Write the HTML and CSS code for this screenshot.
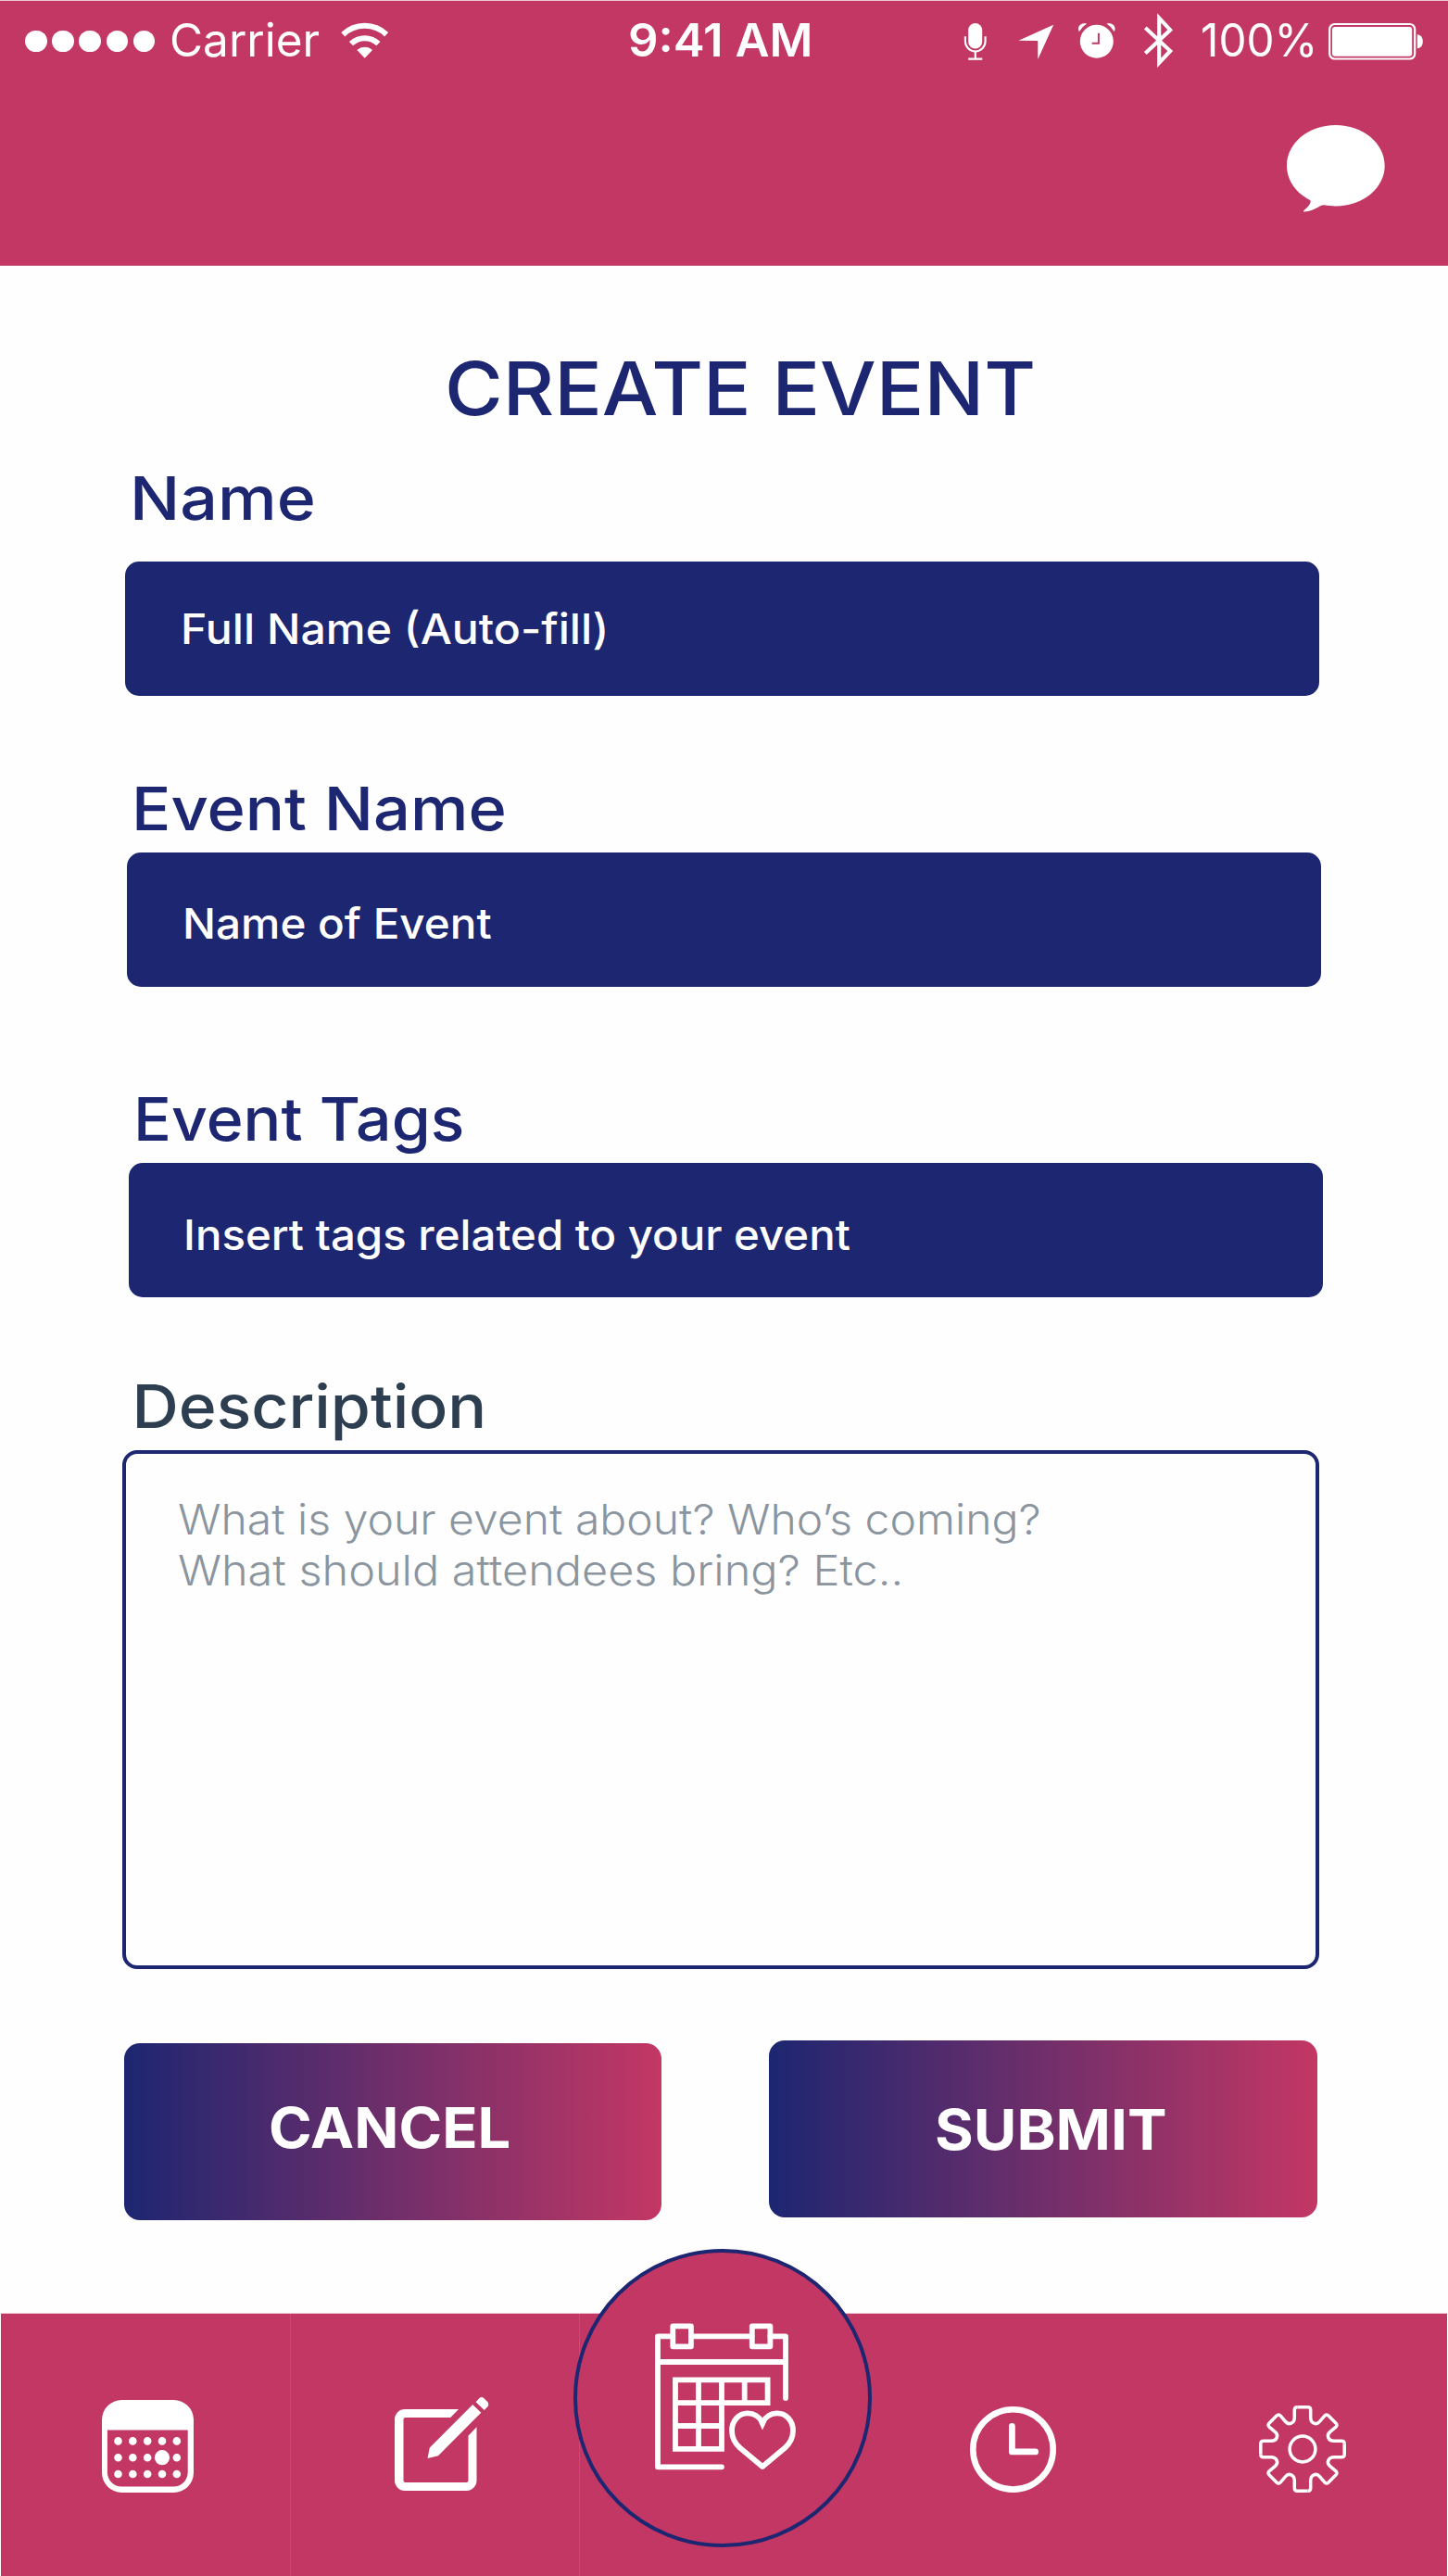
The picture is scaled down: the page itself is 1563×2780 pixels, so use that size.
FILE: index.html
```html
<!DOCTYPE html>
<html lang="en">
<head>
<meta charset="utf-8">
<title>Create Event</title>
<link rel="stylesheet" href="styles.css">
</head>
<body>
<header class="header">
  <div class="status">
    <div class="status-left">
      <div class="signal"><i></i><i></i><i></i><i></i><i></i></div>
      <span class="carrier">Carrier</span>
      <svg class="wifi" viewBox="368 22 52 41" width="52" height="41">
        <g fill="none" stroke="#fff" stroke-width="6">
          <path d="M370.3 36.2A34 34 0 0 1 417.1 36.2"/>
          <path d="M379 46.2A21 21 0 0 1 408.4 46.2"/>
        </g>
        <path fill="#fff" d="M385.4 53A12 12 0 0 1 402 53L393.7 61.8Z"/>
      </svg>
    </div>
    <span class="time">9:41 AM</span>
    <div class="status-right">
      <svg class="mic" viewBox="1040 22 26 43" width="26" height="43">
        <rect x="1045.2" y="24" width="15" height="27.5" rx="7.5" fill="#fff"/>
        <path d="M1041.9 38.3V43.6a10.8 10.8 0 0 0 21.7 0V38.3M1052.8 54.4V62.6M1045.2 62.6H1060.3" fill="none" stroke="#fff" stroke-width="2.1"/>
      </svg>
      <svg class="location" viewBox="1098 24 41 41" width="41" height="41">
        <path fill="#fff" d="M1099.5 42.7L1137.2 25.8L1120.3 63V43Z"/>
      </svg>
      <svg class="alarm" viewBox="1163 22 42 42" width="42" height="42">
        <circle cx="1183.8" cy="43.7" r="18" fill="#fff"/>
        <path fill="#fff" d="M1164.8 33.3C1162 27.5 1167 22.6 1173.2 24.6Q1167.8 28 1164.8 33.3ZM1202.8 33.3C1205.6 27.5 1200.6 22.6 1194.4 24.6Q1199.8 28 1202.8 33.3Z"/>
        <path d="M1185.9 34.7V45.8H1178.7" fill="none" stroke="#c33764" stroke-width="2"/>
      </svg>
      <svg class="bluetooth" viewBox="1233 11 35 63" width="35" height="63">
        <path d="M1236.3 29L1263.2 54L1251.2 66.8V18.4L1263.2 31.3L1236.3 56.5" fill="none" stroke="#fff" stroke-width="4.1" stroke-miterlimit="8"/>
      </svg>
      <span class="percent">100%</span>
      <svg class="battery" viewBox="1433 22 104 43" width="104" height="43">
        <rect x="1435.2" y="25" width="92" height="37.5" rx="5.5" fill="none" stroke="#fff" stroke-width="2.2"/>
        <rect x="1438" y="28" width="86.2" height="31.7" rx="3" fill="#fff"/>
        <path fill="#fff" d="M1529.8 36.3C1537.8 36.3 1537.8 51.3 1529.8 51.3Z"/>
      </svg>
    </div>
  </div>
  <svg class="chat" viewBox="1388 134 108 96" width="108" height="96">
    <path fill="#fff" d="M1441.7 135C1471.2 135 1494.7 154.6 1494.7 178.8C1494.7 203 1471.2 222.5 1441.7 222.5C1437.5 222.5 1433.2 222 1429.5 221.3C1424.5 220.8 1419 228.3 1407.7 228.5C1406.8 228.5 1406.6 227.9 1407.3 227.2C1412 223.7 1416 218.5 1414.2 216C1399 208.5 1389 194.5 1389 178.8C1389 154.6 1412.2 135 1441.7 135Z"/>
  </svg>
</header>

<main class="form">
  <h1 class="title">CREATE EVENT</h1>

  <section class="field field-name">
    <label class="label">Name</label>
    <div class="input"><span>Full Name (Auto-fill)</span></div>
  </section>
  <section class="field field-event">
    <label class="label">Event Name</label>
    <div class="input"><span>Name of Event</span></div>
  </section>
  <section class="field field-tags">
    <label class="label">Event Tags</label>
    <div class="input"><span>Insert tags related to your event</span></div>
  </section>
  <section class="field field-description">
    <label class="label">Description</label>
    <div class="textarea">
      <p class="line-one">What is your event about? Who’s coming?</p>
      <p class="line-two">What should attendees bring? Etc..</p>
    </div>
  </section>

  <div class="actions">
    <button class="button cancel"><span>CANCEL</span></button>
    <button class="button submit"><span>SUBMIT</span></button>
  </div>
</main>

<nav class="tabs">
  <div class="tab">
    <svg class="calendar-icon" viewBox="109 2588 101 102" width="101" height="102">
      <path fill="#fff" fill-rule="evenodd" d="M131.5 2589H187.5A21.5 21.5 0 0 1 209 2610.5V2667.5A21.5 21.5 0 0 1 187.5 2689H131.5A21.5 21.5 0 0 1 110 2667.5V2610.5A21.5 21.5 0 0 1 131.5 2589ZM115.9 2621.5V2667A15.5 15.5 0 0 0 131.4 2682.5H187.2A15.5 15.5 0 0 0 202.7 2667V2621.5Z"/>
      <g fill="none" stroke="#fff" stroke-width="8.6" stroke-linecap="round" stroke-dasharray="0 15.83">
        <path d="M127.5 2633.4H192M127.5 2651.2H192M127.5 2669H192"/>
      </g>
      <circle cx="175" cy="2651.2" r="8.1" fill="#fff"/>
    </svg>
  </div>
  <div class="tab">
    <svg class="edit-icon" viewBox="425 2586 103 103" width="103" height="103">
      <path fill="#fff" d="M495 2600H437A11 11 0 0 0 426 2611V2677A11 11 0 0 0 437 2688H503.5A11 11 0 0 0 514.5 2677V2619.3L505.5 2628.5V2677Q505.5 2679 503.5 2679H437.5Q435.5 2679 435.5 2677V2611Q435.5 2609 437.5 2609H486.2Z"/>
      <path fill="#fff" d="M461.5 2652.9L463.8 2641.5L510.2 2595L519.3 2603.8L473 2650.2ZM513.6 2592.2L517 2588.5Q519.7 2585.8 522.4 2588.2L525.8 2591.6Q528.3 2594.3 526.5 2597L522.8 2600.9Z"/>
    </svg>
  </div>
  <div class="tab"></div>
  <div class="tab">
    <svg class="clock-icon" viewBox="1046 2596 95 95" width="95" height="95">
      <g fill="none" stroke="#fff">
        <circle cx="1093.5" cy="2643.4" r="43.2" stroke-width="6.6"/>
        <path d="M1092.4 2618.5V2645.9H1117.6" stroke-width="6.8" stroke-linecap="round" stroke-linejoin="round"/>
      </g>
    </svg>
  </div>
  <div class="tab">
    <svg class="settings-icon" viewBox="-48 -48 96 96" width="96" height="96">
      <defs>
        <path id="cog-quarter" d="M-5.7 -45.2H5.7Q8.7 -45.2 8.7 -42.2V-34C8.7 -27.5 15 -25.5 18.3 -29.5L23.6 -35.7Q25.7 -38.2 28 -35.9L35.9 -28Q38.2 -25.7 35.7 -23.6L29.5 -18.3C25.5 -15 27.5 -8.7 34 -8.7H42.2Q45.2 -8.7 45.2 -5.7"/>
      </defs>
      <g fill="none" stroke="#fff" stroke-width="3.5">
        <use href="#cog-quarter"/>
        <use href="#cog-quarter" transform="rotate(90)"/>
        <use href="#cog-quarter" transform="rotate(180)"/>
        <use href="#cog-quarter" transform="rotate(270)"/>
        <circle r="13.9"/>
      </g>
    </svg>
  </div>
  <div class="center-tab">
    <svg viewBox="706 2506 154 160" width="154" height="160">
      <g fill="none" stroke="#fff" stroke-width="5.8" stroke-linecap="round" stroke-linejoin="round">
        <path d="M726 2521.3H710V2662.3H779M746 2521.3H811.5M831.5 2521.3H848V2588M710 2549H848"/>
        <rect x="726.3" y="2510.3" width="19.6" height="22"/>
        <rect x="811.8" y="2510.3" width="19.6" height="22"/>
        <path stroke-linejoin="miter" d="M729 2568.4H828.6V2593.2H729ZM729 2593.2V2642.8H779V2568.4M754 2568.4V2642.8M803.7 2568.4V2593.2M729 2618H779"/>
        <path d="M823 2614.5C820 2608.5 814 2604.4 807 2604.4C797.5 2604.4 790 2612.5 790 2623C790 2630 793 2636.5 798.5 2641.5L823 2662L847.5 2641.5C853 2636.5 856 2630 856 2623C856 2612.5 848.5 2604.4 839 2604.4C832 2604.4 826 2608.5 823 2614.5"/>
      </g>
      <path fill="#fff" d="M819 2614L823 2622.5L827 2614Z"/>
    </svg>
  </div>
</nav>
</body>
</html>
```
FILE: styles.css
```css
* { box-sizing: border-box; }

body {
  margin: 0;
  width: 1563px;
  height: 2780px;
  display: flex;
  flex-direction: column;
  background: #fefefe;
  color: #1d2671;
  font-family: Inter, "Liberation Sans", sans-serif;
  overflow: hidden;
}

h1, p { margin: 0; }
svg { display: block; flex: none; }

/* Header and status bar */
.header {
  flex: none;
  height: 287px;
  display: flex;
  flex-direction: column;
  background: #c33764;
  border-top: 1px solid #ecc6d2;
  border-bottom: 1px solid #d0668a;
  color: #fff;
}

.status {
  height: 84px;
  display: grid;
  grid-template-columns: 677px 363px 1fr;
  align-items: center;
  font-size: 49.5px;
  line-height: 82px;
}

.status-left, .status-right { display: flex; align-items: center; }
.status-left { padding-left: 27px; }
.signal { display: flex; gap: 5.6px; margin-top: 3px; }
.signal i { width: 23.6px; height: 23.6px; border-radius: 50%; background: #fff; }
.carrier { margin: -1px 0 0 15.6px; width: 162px; font-weight: 400; }
.wifi { margin-left: 23px; }
.time {
  justify-self: start;
  margin: -1px 0 0 1px;
  font-weight: 600;
  transform: scaleX(1.028);
  transform-origin: left;
  white-space: nowrap;
}
.mic { margin-top: 3px; }
.location { margin: 5px 0 0 32px; }
.alarm { margin: 2px 0 0 24px; }
.bluetooth { margin-left: 28px; }
.percent { margin: -1px 0 0 28px; width: 126px; transform: scaleX(.963); transform-origin: left; }
.battery { margin: 3px 0 0 11px; }
.chat { align-self: flex-end; margin: 49px 67px 0 0; }

/* Form */
.form { flex: none; height: 2209px; }

.title {
  width: fit-content;
  margin: 84px 0 0 479.7px;
  font-size: 80px;
  line-height: 96px;
  font-weight: 500;
  transform: scaleX(1.07);
  transform-origin: left;
}

.field { display: flex; flex-direction: column; width: 1289px; }

.label {
  align-self: flex-start;
  padding-left: 5px;
  font-size: 65px;
  line-height: 78px;
  font-weight: 500;
  transform-origin: 5px 0;
}

.input {
  height: 145px;
  padding-left: 60px;
  display: flex;
  align-items: center;
  border-radius: 15px;
  background: #1d2671;
  color: #fff;
  font-size: 45.5px;
  line-height: 56px;
  font-weight: 500;
}
.input span { transform-origin: left; white-space: nowrap; }

.field-name { margin: 32px 0 0 134.6px; }
.field-name .label { transform: scaleX(1.104); margin-bottom: 29px; }
.field-name .input span { transform: scaleX(1.06); }

.field-event { margin: 83px 0 0 136.6px; }
.field-event .label { transform: scaleX(1.082); margin-bottom: 7.5px; }
.field-event .input { padding-top: 9px; }
.field-event .input span { transform: scaleX(1.047); }

.field-tags { margin: 104.5px 0 0 139px; }
.field-tags .label { transform: scaleX(1.045); margin-bottom: 7.5px; }
.field-tags .input { padding: 11px 0 0 59px; }
.field-tags .input span { transform: scaleX(1.041); }

.field-description { margin: 79.5px 0 0 132px; width: 1291.5px; }
.field-description .label {
  padding-left: 10.5px;
  color: #2c3e50;
  transform: scaleX(1.072);
  transform-origin: 10.5px 0;
  margin-bottom: 8px;
}

.textarea {
  height: 560px;
  padding: 43px 0 0 56px;
  border: 4px solid #1d2671;
  border-radius: 16px;
  color: #8a95a0;
  font-size: 45.5px;
  line-height: 55px;
  font-weight: 300;
}
.textarea p { width: fit-content; transform-origin: left; white-space: nowrap; }
.line-one { transform: scaleX(1.057); }
.line-two { transform: scaleX(1.068); }

.actions { display: flex; align-items: flex-start; padding: 77px 0 0 134px; gap: 116.5px; }

.button {
  height: 191px;
  padding: 0;
  border: 0;
  border-radius: 17px;
  background: linear-gradient(90deg, #1d2671, #c33764);
  color: #fff;
  font: 700 60.5px/73px Inter, "Liberation Sans", sans-serif;
  text-align: left;
}
.button span { display: block; width: fit-content; transform-origin: left; }
.cancel { width: 579.5px; margin-top: 3px; padding: 0 0 8px 156.4px; }
.cancel span { transform: scaleX(1.045); }
.submit { width: 592px; padding: 1px 0 0 178.5px; }
.submit span { transform: scaleX(1.054); }

/* Bottom tab bar */
.tabs {
  flex: none;
  position: relative;
  height: 284px;
  margin: 0 1px;
  display: grid;
  grid-template-columns: 312.5px 312px 312.5px 312px 1fr;
  background: #c33764;
  border-top: 1px solid #ecc6d2;
}
.tab { display: flex; align-items: center; justify-content: center; padding-top: 10px; }
.tab:nth-child(-n+2) { border-right: 1px solid #c84a73; }
.calendar-icon { margin: -7px 0 0 5px; }
.edit-icon { margin: -12px 0 0 14px; }
.clock-icon { margin-right: 1px; }
.settings-icon { margin-top: -1.5px; }

.center-tab {
  position: absolute;
  left: 618.3px;
  top: -69.7px;
  width: 321.5px;
  height: 321.5px;
  padding: 75px 0 0 82.7px;
  border: 4px solid #1d2671;
  border-radius: 50%;
  background: #c33764;
}
```
